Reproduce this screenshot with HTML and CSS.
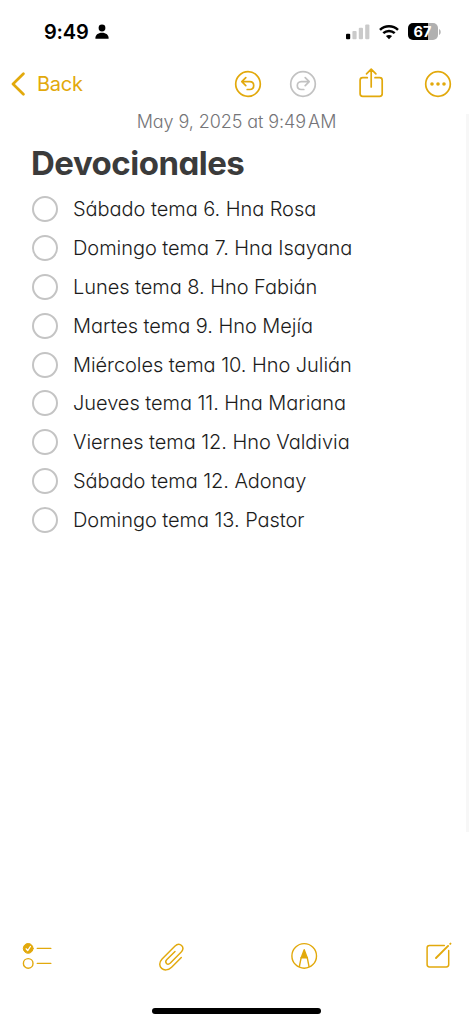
FILE: index.html
```html
<!DOCTYPE html>
<html lang="es">
<head>
<meta charset="utf-8">
<meta name="viewport" content="width=device-width, initial-scale=1">
<title>Devocionales</title>
<link rel="stylesheet" href="styles.css">
</head>
<body>
<div class="screen">
  <header class="status">
    <span class="clock">9:49</span>
    <svg class="person" width="14" height="16" viewBox="0 0 14 16"><circle cx="7" cy="4" r="3.400"/><path d="M.4 14.700C.1 11 3 8.800 7 8.800s6.900 2.200 6.600 5.900z"/></svg>
    <div class="indicators">
      <svg width="24" height="16" viewBox="0 0 24 16"><rect x="0" y="9.700" width="4.200" height="5.500" rx="1"/><g fill="#cacaca"><rect x="6.400" y="7" width="4.200" height="8.200" rx="1"/><rect x="12.800" y="3.800" width="4.200" height="11.400" rx="1"/><rect x="19.200" y=".4" width="4.200" height="14.800" rx="1"/></g></svg>
      <svg class="wifi" width="20" height="16" viewBox="0 0 20 16" fill="none" stroke="#000" stroke-width="2.500"><path d="M1 5.800C6 .9 14 .9 19 5.800M4.300 9.200c3.200-3 8.200-3 11.400 0"/><path d="M10 15.200 6.900 12.100c1.700-1.600 4.500-1.600 6.200 0z" fill="#000" stroke="none"/></svg>
      <div class="battery"><span>67</span></div>
      <svg class="tip" width="2" height="6" viewBox="0 0 2 6"><path d="M0 0c2.300 1 2.300 5 0 6z" fill="#b5b5b5"/></svg>
    </div>
  </header>
  <nav class="nav">
    <svg width="15" height="24" viewBox="0 0 15 24" fill="none" stroke="currentColor" stroke-width="2.700" stroke-linecap="round" stroke-linejoin="round"><path d="M13.400 1.800 3 12l10.400 10.200"/></svg>
    <span class="back">Back</span>
    <svg class="undo" width="28" height="28" viewBox="0 0 28 28" fill="none" stroke="currentColor" stroke-width="1.700" stroke-linecap="round" stroke-linejoin="round"><circle cx="14" cy="14" r="12.300"/><path d="m11.800 7.600-4 4 4 4M8 11.600h7.800c5.200 0 5.200 7.900 0 7.900h-2.600"/></svg>
    <svg class="redo" width="28" height="28" viewBox="0 0 28 28" fill="none" stroke="currentColor" stroke-width="1.700" stroke-linecap="round" stroke-linejoin="round"><circle cx="14" cy="14" r="12.300"/><path d="m16.200 7.600 4 4-4 4M20 11.600h-7.800c-5.200 0-5.200 7.900 0 7.900h2.600"/></svg>
    <svg class="share" width="26" height="32" viewBox="0 0 26 32" fill="none" stroke="currentColor" stroke-width="1.700" stroke-linecap="round" stroke-linejoin="round"><path d="M9.300 10.700H4.700a2.600 2.600 0 0 0-2.600 2.600v13.400a2.600 2.600 0 0 0 2.600 2.600h16.900a2.600 2.600 0 0 0 2.600-2.600V13.300a2.600 2.600 0 0 0-2.600-2.600H17M13.200 20V2.500M8.500 6.900l4.700-4.700 4.700 4.700"/></svg>
    <svg class="more" width="28" height="28" viewBox="0 0 28 28"><circle cx="14" cy="14" r="12.300" fill="none" stroke="currentColor" stroke-width="1.700"/><g fill="currentColor"><circle cx="8" cy="14" r="1.800"/><circle cx="14" cy="14" r="1.800"/><circle cx="20" cy="14" r="1.800"/></g></svg>
  </nav>
  <main class="note">
    <p class="date">May 9, 2025 at 9:49<span class="meridiem">AM</span></p>
    <h1 class="title">Devocionales</h1>
    <ul class="list">
      <li><i class="check"></i><span>Sábado tema 6. Hna Rosa</span></li>
      <li><i class="check"></i><span>Domingo tema 7. Hna Isayana</span></li>
      <li><i class="check"></i><span>Lunes tema 8. Hno Fabián</span></li>
      <li><i class="check"></i><span>Martes tema 9. Hno Mejía</span></li>
      <li><i class="check"></i><span>Miércoles tema 10. Hno Julián</span></li>
      <li><i class="check"></i><span>Jueves tema 11. Hna Mariana</span></li>
      <li><i class="check"></i><span>Viernes tema 12. Hno Valdivia</span></li>
      <li><i class="check"></i><span>Sábado tema 12. Adonay</span></li>
      <li><i class="check"></i><span>Domingo tema 13. Pastor</span></li>
    </ul>
  </main>
  <footer class="tools">
    <svg width="32" height="32" viewBox="0 0 32 32" fill="none" stroke="currentColor" stroke-width="1.400" stroke-linecap="round" stroke-linejoin="round"><circle cx="6.200" cy="8.400" r="4.900" fill="currentColor" stroke-width="1"/><path d="m4.200 8.800 1.500 1.800 2.700-4.100" stroke="#fff" stroke-width="1.300"/><circle cx="6.200" cy="23.400" r="4.800"/><path d="M15.300 8.400h13.500M15.300 23.400h13.500"/></svg>
    <svg width="32" height="32" viewBox="0 0 32 32" fill="none" stroke="currentColor" stroke-width="1.450" stroke-linecap="round" stroke-linejoin="round"><path d="m26.300 17.500-9.700 9.700c-7.200 7.100-16.200-1.200-9.500-8.200L19.800 6.200c5-4.800 11 1 6.200 6.100L15.400 23c-3 2.800-6.300-.6-3.500-3.500l8.100-8.100"/></svg>
    <svg width="32" height="32" viewBox="0 0 32 32" fill="none" stroke="currentColor" stroke-width="1.400" stroke-linejoin="round"><circle cx="15.200" cy="15.900" r="12.300"/><path d="m10.300 26.900 1.900-9.500h6l1.900 9.500"/><path d="m15.200 9.700 3 8h-6z" fill="currentColor"/></svg>
    <svg width="32" height="32" viewBox="0 0 32 32" fill="none" stroke="currentColor" stroke-width="1.500" stroke-linecap="round" stroke-linejoin="round"><path d="M22.300 5.400H7.500a2.400 2.400 0 0 0-2.400 2.400V24.500a2.400 2.400 0 0 0 2.400 2.400h16.800a2.400 2.400 0 0 0 2.400-2.400V10.500"/><path d="M14 18 26.100 5.900" stroke-width="1.900"/><path d="m28.200 3.900.3-.3" stroke-width="1.900"/></svg>
  </footer>
  <div class="home"></div>
</div>
</body>
</html>
```
FILE: styles.css
```css
* { box-sizing: border-box; }
body { margin: 0; background: #fff; font-family: Inter, "Liberation Sans", sans-serif; }
svg { display: block; flex: none; }
.screen { width: 473px; height: 1024px; overflow: hidden; display: flex; flex-direction: column; color: #1c1c1c; }
.status { height: 63px; padding: 0 32px 0 44px; display: flex; align-items: center; color: #000; flex: none; }
.clock { font-size: 20px; font-weight: 600; line-height: 24px; width: 51px; letter-spacing: -.2px; }
.indicators { margin-left: auto; display: flex; align-items: center; }
.wifi { margin: 0 9px; }
.battery { width: 30px; height: 17px; padding-right: 1px; border-radius: 5px; background: linear-gradient(90deg, #000 67%, #b0b0b0 67%); color: #fff; font-size: 14.5px; font-weight: 700; line-height: 17px; text-align: center; }
.tip { margin-left: 1px; }
.nav { height: 40px; margin-top: 1px; padding: 0 21px 0 10px; display: flex; align-items: center; color: #e2a90c; flex: none; }
.back { margin-left: 12px; font-size: 20px; line-height: 24px; font-weight: 400; letter-spacing: -.25px; }
.undo { margin-left: auto; }
.redo { margin-left: 27px; color: #c2c2c2; }
.share { margin: -3px 0 0 41px; }
.more { margin-left: 40px; }
.note { height: 718px; margin: 10px 4px 0 0; padding: 0 0 0 31px; border-right: 3px solid #f7f7f7; flex: none; font-feature-settings: "cv11"; }
.date { margin: 0; padding-right: 24px; text-align: center; font-size: 18px; line-height: 16px; font-weight: 300; color: #757578; letter-spacing: -.08px; }
.meridiem { margin-left: 2px; }
.title { margin: 13px 0 7px; font-size: 33px; line-height: 40px; font-weight: 700; color: #3b3b3b; letter-spacing: -.5px; }
.list { margin: 0; padding: 0; list-style: none; }
.list li { height: 38.8px; display: flex; align-items: center; gap: 15px; padding-left: 1px; font-size: 20px; line-height: 26px; font-weight: 300; white-space: nowrap; letter-spacing: -.05px; }
.check { width: 26px; height: 26px; border: 2px solid #c4c4c4; border-radius: 50%; flex: none; }
.tools { height: 32px; margin: 108px 19px 0 22px; display: flex; justify-content: space-between; color: #e2a90c; flex: none; }
.home { width: 169px; height: 6px; margin: 36px 0 0 152px; border-radius: 3px; background: #000; flex: none; }
```
